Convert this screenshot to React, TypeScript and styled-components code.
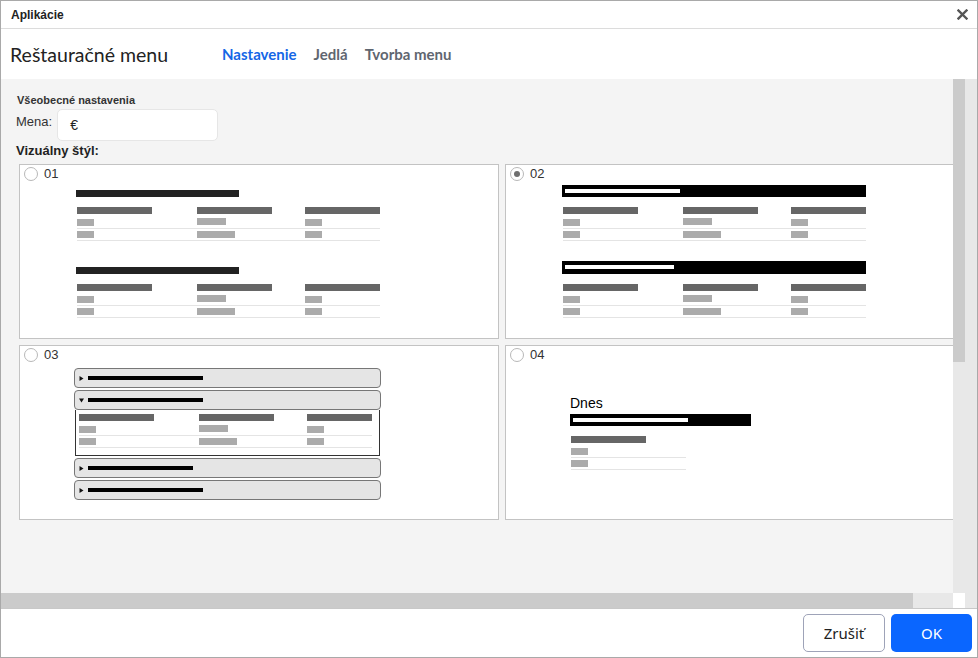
import React from "react";
import styled, { createGlobalStyle } from "styled-components";

const GlobalStyle = createGlobalStyle`
  html, body { margin: 0; padding: 0; background: #fff; }
  body { overflow: hidden; font-family: "Liberation Sans", Arial, sans-serif; }
  * { box-sizing: border-box; }
`;

const Window = styled.div`
  width: 978px;
  height: 658px;
  border: 1px solid #a9a9a9;
  background: #fff;
  display: flex;
  flex-direction: column;
  overflow: hidden;
`;

const TitleBar = styled.div`
  height: 28px;
  flex: none;
  border-bottom: 1px solid #dcdcdc;
  display: flex;
  align-items: center;
  justify-content: space-between;
  padding: 0 9px 0 10px;
  font: bold 12px "Liberation Sans", Arial, sans-serif;
  color: #222;
`;

const CloseButton = styled.button`
  border: none;
  background: none;
  padding: 0;
  width: 11px;
  height: 11px;
  display: flex;
  align-items: center;
  justify-content: center;
  cursor: pointer;
`;

const Header = styled.div`
  height: 50px;
  flex: none;
  display: flex;
  align-items: center;
  padding-left: 9px;
`;

const AppTitle = styled.div`
  width: 212px;
  font: 400 19.5px Lato, "Open Sans", sans-serif;
  color: #222;
`;

const Tabs = styled.nav`
  display: flex;
  gap: 17px;
`;

const Tab = styled.span<{ $active?: boolean }>`
  font: bold 15px Lato, "Open Sans", sans-serif;
  color: ${(p) => (p.$active ? "#1466e6" : "#5f6670")};
  cursor: pointer;
`;

const Body = styled.div`
  flex: 1;
  display: flex;
  min-height: 0;
`;

const ScrollPane = styled.div`
  flex: 1;
  display: flex;
  flex-direction: column;
  min-width: 0;
`;

const Viewport = styled.div`
  flex: 1;
  min-height: 0;
  overflow: hidden;
  background: #f4f4f4;
  padding: 14px 0 0 15px;
`;

const HScroll = styled.div`
  height: 15px;
  flex: none;
  background: #e8e8e8;
  display: flex;
`;

const HThumb = styled.div`
  width: 912px;
  background: #cbcbcb;
`;

const VScrollCol = styled.div`
  width: 12px;
  flex: none;
  display: flex;
  flex-direction: column;
  background: #e8e8e8;
`;

const VThumb = styled.div`
  height: 283px;
  background: #cbcbcb;
`;

const Corner = styled.div`
  margin-top: auto;
  height: 15px;
  background: #fff;
`;

const OuterTrack = styled.div`
  width: 12px;
  flex: none;
  background: #e8e8e8;
`;

const SectionLabel = styled.div`
  font: bold 11px/14px "Liberation Sans", Arial, sans-serif;
  color: #333;
  padding-left: 1px;
`;

const FieldRow = styled.div`
  margin-top: 2px;
  display: flex;
  align-items: flex-start;
  gap: 5px;
`;

const FieldLabel = styled.label`
  padding-top: 5px;
  font: 13px/16px "Liberation Sans", Arial, sans-serif;
  color: #333;
`;

const CurrencyField = styled.div`
  width: 161px;
  height: 32px;
  background: #fff;
  border: 1px solid #e6e6e6;
  border-radius: 5px;
  padding-left: 12px;
  display: flex;
  align-items: center;
  font: 14px "Liberation Sans", Arial, sans-serif;
  color: #222;
`;

const StyleLabel = styled.div`
  margin-top: 2px;
  font: bold 13px/16px "Liberation Sans", Arial, sans-serif;
  color: #222;
`;

const CardGrid = styled.div`
  margin: 5px 0 0 3px;
  display: grid;
  grid-template-columns: 480px 480px;
  grid-auto-rows: 175px;
  gap: 6px;
`;

const Card = styled.div`
  background: #fff;
  border: 1px solid #c3c3c3;
  display: flex;
  flex-direction: column;
  overflow: hidden;
`;

const RadioRow = styled.div`
  display: flex;
  align-items: center;
  gap: 6px;
  padding: 2px 0 0 4px;
  font: 13px/14px "Liberation Sans", Arial, sans-serif;
  color: #333;
`;

const Radio = styled.span<{ $checked?: boolean }>`
  width: 14px;
  height: 14px;
  flex: none;
  border: 1px solid #b8b8b8;
  border-radius: 50%;
  background: #fff;
  display: flex;
  align-items: center;
  justify-content: center;
  &::after {
    content: "";
    display: ${(p) => (p.$checked ? "block" : "none")};
    width: 6px;
    height: 6px;
    border-radius: 50%;
    background: #6f6f6f;
  }
`;

const Preview = styled.div`
  padding: 3px 0 0 56px;
  display: flex;
  flex-direction: column;
  gap: 20px;
`;

const Group = styled.div`
  display: flex;
  flex-direction: column;
`;

const TitleWrap = styled.div`
  height: 13px;
  display: flex;
  align-items: flex-end;
`;

const PlainTitle = styled.div`
  width: 163px;
  height: 7px;
  background: #222;
`;

const InvertedTitle = styled.div<{ $w: number; $h: number }>`
  width: ${(p) => p.$w}px;
  height: ${(p) => p.$h}px;
  flex: none;
  background: #000;
  padding: 4px 0 0 3px;
`;

const WhiteBar = styled.div<{ $w: number }>`
  width: ${(p) => p.$w}px;
  height: 4px;
  background: #fff;
`;

const Table = styled.div<{ $w: number; $top?: number; $left?: number }>`
  width: ${(p) => p.$w}px;
  margin-top: ${(p) => p.$top ?? 10}px;
  margin-left: ${(p) => p.$left ?? 1}px;
  overflow: hidden;
`;

const HeadRow = styled.div<{ $cols: string }>`
  display: grid;
  grid-template-columns: ${(p) => p.$cols};
  margin-bottom: 3px;
`;

const DataRow = styled.div<{ $cols: string }>`
  display: grid;
  grid-template-columns: ${(p) => p.$cols};
  padding: 2px 0;
  border-bottom: 1px solid #e4e4e4;
`;

const HeadBar = styled.div`
  width: 75px;
  height: 7px;
  background: #666;
`;

const CellBar = styled.div<{ $w: number; $lift?: boolean }>`
  width: ${(p) => p.$w}px;
  height: 7px;
  background: #ababab;
  margin-top: ${(p) => (p.$lift ? -1 : 0)}px;
`;

const AccordionList = styled.div`
  margin: 6px 0 0 54px;
  width: 307px;
  display: flex;
  flex-direction: column;
  gap: 2px;
`;

const AccSection = styled.div`
  display: flex;
  flex-direction: column;
`;

const AccHeader = styled.div`
  height: 20px;
  border: 1px solid #777;
  border-radius: 4px;
  background: #e5e5e5;
  display: flex;
  align-items: center;
  gap: 4px;
  padding-left: 4px;
`;

const AccBody = styled.div`
  margin: 0 1px;
  height: 46px;
  border: 1px solid #333;
  border-top: none;
  padding: 4px 0 0 3px;
  overflow: hidden;
`;

const BlackBar = styled.div<{ $w: number }>`
  width: ${(p) => p.$w}px;
  height: 4px;
  background: #000;
`;

const DayPreview = styled.div`
  padding: 33px 0 0 64px;
  display: flex;
  flex-direction: column;
`;

const DayLabel = styled.div`
  font: 14px/16px "Liberation Sans", Arial, sans-serif;
  color: #000;
`;

const DayBar = styled(InvertedTitle)`
  margin-top: 3px;
`;

const Footer = styled.div`
  height: 49px;
  flex: none;
  border-top: 1px solid #c8c8c8;
  display: flex;
  align-items: center;
  justify-content: flex-end;
  gap: 6px;
  padding-right: 5px;
`;

const CancelButton = styled.button`
  width: 82px;
  height: 38px;
  border: 1px solid #9ea3b8;
  border-radius: 5px;
  background: #fff;
  font: 15px "Noto Sans", "Open Sans", sans-serif;
  color: #222;
  cursor: pointer;
`;

const OkButton = styled.button`
  width: 81px;
  height: 38px;
  border: none;
  border-radius: 5px;
  background: #0a66ff;
  font: 15px "Noto Sans", "Open Sans", sans-serif;
  color: #fff;
  cursor: pointer;
`;

const COLS3 = "120px 108px 75px";

const Triangle: React.FC<{ down?: boolean }> = ({ down }) => (
  <svg width="5" height="5" viewBox="0 0 5 5" style={{ flex: "none" }}>
    {down ? (
      <polygon points="0,0.5 5,0.5 2.5,4.5" fill="#111" />
    ) : (
      <polygon points="0.5,0 4.5,2.5 0.5,5" fill="#111" />
    )}
  </svg>
);

const SampleTable: React.FC<{ width?: number; top?: number; left?: number }> = ({ width = 303, top, left }) => (
  <Table $w={width} $top={top} $left={left}>
    <HeadRow $cols={COLS3}>
      <HeadBar />
      <HeadBar />
      <HeadBar />
    </HeadRow>
    <DataRow $cols={COLS3}>
      <CellBar $w={17} />
      <CellBar $w={29} $lift />
      <CellBar $w={17} />
    </DataRow>
    <DataRow $cols={COLS3}>
      <CellBar $w={17} />
      <CellBar $w={38} />
      <CellBar $w={17} />
    </DataRow>
  </Table>
);

const CloseIcon = () => (
  <svg width="11" height="11" viewBox="0 0 11 11">
    <path d="M1.5 1.5 L9.5 9.5 M9.5 1.5 L1.5 9.5" stroke="#555" strokeWidth="2.4" strokeLinecap="square" />
  </svg>
);

export default function App() {
  return (
    <>
      <GlobalStyle />
      <Window>
        <TitleBar>
          <span>Aplikácie</span>
          <CloseButton aria-label="Zavrieť">
            <CloseIcon />
          </CloseButton>
        </TitleBar>
        <Header>
          <AppTitle>Reštauračné menu</AppTitle>
          <Tabs>
            <Tab $active>Nastavenie</Tab>
            <Tab>Jedlá</Tab>
            <Tab>Tvorba menu</Tab>
          </Tabs>
        </Header>
        <Body>
          <ScrollPane>
            <Viewport>
              <SectionLabel>Všeobecné nastavenia</SectionLabel>
              <FieldRow>
                <FieldLabel>Mena:</FieldLabel>
                <CurrencyField>€</CurrencyField>
              </FieldRow>
              <StyleLabel>Vizuálny štýl:</StyleLabel>
              <CardGrid>
                <Card>
                  <RadioRow>
                    <Radio />
                    <span>01</span>
                  </RadioRow>
                  <Preview>
                    {[0, 1].map((i) => (
                      <Group key={i}>
                        <TitleWrap>
                          <PlainTitle />
                        </TitleWrap>
                        <SampleTable />
                      </Group>
                    ))}
                  </Preview>
                </Card>
                <Card>
                  <RadioRow>
                    <Radio $checked />
                    <span>02</span>
                  </RadioRow>
                  <Preview>
                    <Group>
                      <TitleWrap>
                        <InvertedTitle $w={304} $h={12}>
                          <WhiteBar $w={115} />
                        </InvertedTitle>
                      </TitleWrap>
                      <SampleTable />
                    </Group>
                    <Group>
                      <TitleWrap>
                        <InvertedTitle $w={304} $h={13}>
                          <WhiteBar $w={109} />
                        </InvertedTitle>
                      </TitleWrap>
                      <SampleTable />
                    </Group>
                  </Preview>
                </Card>
                <Card>
                  <RadioRow>
                    <Radio />
                    <span>03</span>
                  </RadioRow>
                  <AccordionList>
                    <AccSection>
                      <AccHeader>
                        <Triangle />
                        <BlackBar $w={115} />
                      </AccHeader>
                    </AccSection>
                    <AccSection>
                      <AccHeader>
                        <Triangle down />
                        <BlackBar $w={115} />
                      </AccHeader>
                      <AccBody>
                        <SampleTable width={293} top={0} left={0} />
                      </AccBody>
                    </AccSection>
                    <AccSection>
                      <AccHeader>
                        <Triangle />
                        <BlackBar $w={105} />
                      </AccHeader>
                    </AccSection>
                    <AccSection>
                      <AccHeader>
                        <Triangle />
                        <BlackBar $w={115} />
                      </AccHeader>
                    </AccSection>
                  </AccordionList>
                </Card>
                <Card>
                  <RadioRow>
                    <Radio />
                    <span>04</span>
                  </RadioRow>
                  <DayPreview>
                    <DayLabel>Dnes</DayLabel>
                    <DayBar $w={181} $h={12}>
                      <WhiteBar $w={115} />
                    </DayBar>
                    <Table $w={115}>
                      <HeadRow $cols="115px">
                        <HeadBar />
                      </HeadRow>
                      <DataRow $cols="115px">
                        <CellBar $w={17} />
                      </DataRow>
                      <DataRow $cols="115px">
                        <CellBar $w={17} />
                      </DataRow>
                    </Table>
                  </DayPreview>
                </Card>
              </CardGrid>
            </Viewport>
            <HScroll>
              <HThumb />
            </HScroll>
          </ScrollPane>
          <VScrollCol>
            <VThumb />
            <Corner />
          </VScrollCol>
          <OuterTrack />
        </Body>
        <Footer>
          <CancelButton>Zrušiť</CancelButton>
          <OkButton>OK</OkButton>
        </Footer>
      </Window>
    </>
  );
}
